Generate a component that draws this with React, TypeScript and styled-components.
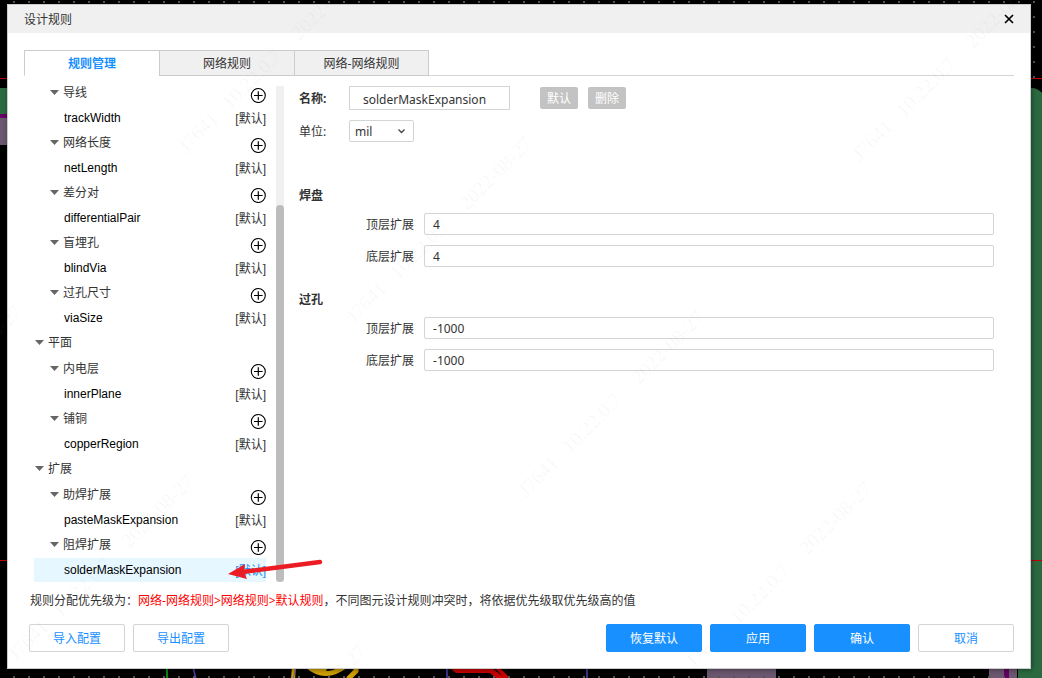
import React, { useState } from 'react';
import styled, { createGlobalStyle } from 'styled-components';

const cjk = '"Noto Sans CJK SC", sans-serif';
const uiFont = `"Noto Sans", ${cjk}`;
const blue = '#1890ff';
const line = '#d4d4d4';

const GlobalStyle = createGlobalStyle`
  *, *::before, *::after { box-sizing: border-box; }
  body {
    margin: 0;
    background: #000;
    color: #333;
    font: 12px/18px ${uiFont};
  }
  button, input, select { font: inherit; color: inherit; margin: 0; }
  ul { list-style: none; margin: 0; padding: 0; }
`;

const Page = styled.div`
  display: flex;
  min-height: 100vh;
  padding: 4px 11px 9px 7px;
  overflow: hidden;
  position: relative;
`;

const Board = styled.svg`
  position: absolute;
  inset: 0;
  width: 100%;
  height: 100%;
`;

const Watermark = styled(Board)`
  pointer-events: none;
  fill: #888;
  fill-opacity: 0.06;
  font: 20px "Liberation Serif", serif;
`;

const Dialog = styled.section`
  position: relative;
  flex: 1;
  display: flex;
  flex-direction: column;
  min-width: 0;
  background: #fff;
  border: 1px solid #ccc;
  box-shadow: 1px 1px 5px rgba(0, 0, 0, 0.4);
`;

const TitleBar = styled.header`
  display: flex;
  align-items: center;
  justify-content: space-between;
  height: 28px;
  padding: 0 16px;
  background: #f0f0f0;
`;

const Title = styled.h1`
  margin: 0;
  padding-top: 2px;
  font: inherit;
`;

const CloseButton = styled.button`
  display: flex;
  padding: 0;
  border: 0;
  background: none;
  color: #000;
`;

const Body = styled.div`
  flex: 1;
  display: flex;
  flex-direction: column;
  padding: 17px 16px 16px;
`;

const Tabs = styled.div`
  display: flex;
  border-bottom: 1px solid ${line};
`;

const Tab = styled.button<{ $active: boolean }>`
  width: 135px;
  height: 26px;
  margin-bottom: -1px;
  padding: 2px 0 0;
  border: 1px solid #ccc;
  border-right-width: 0;
  border-bottom-color: ${p => (p.$active ? '#fff' : '#ccc')};
  background: ${p => (p.$active ? '#fff' : '#f0f0f0')};
  color: ${p => (p.$active ? blue : '#333')};
  font-weight: ${p => (p.$active ? 700 : 400)};
  &:last-child { border-right-width: 1px; }
`;

const Workspace = styled.div`
  flex: 1;
  display: flex;
  gap: 15px;
  margin-top: 10px;
`;

const Sidebar = styled.nav`
  position: relative;
  display: flex;
  gap: 10px;
  width: 260px;
  padding-left: 10px;
`;

const Tree = styled.ul`
  flex: 1;
  display: flex;
  flex-direction: column;
  justify-content: flex-end;
  height: 496px;
  overflow: hidden;
`;

const GroupRow = styled.li<{ $level: number }>`
  flex: none;
  display: flex;
  align-items: center;
  gap: 4px;
  height: 26px;
  padding-left: ${p => (p.$level ? 16 : 1)}px;
`;

const GroupName = styled.span`
  flex: 1;
  line-height: 14px;
`;

const AddButton = styled.button`
  align-self: flex-end;
  display: flex;
  padding: 0 0 3px;
  border: 0;
  background: none;
  color: #000;
`;

const RuleRow = styled.li<{ $selected: boolean }>`
  flex: none;
  height: 24px;
  background: ${p => (p.$selected ? '#e6f7ff' : 'transparent')};
`;

const RuleButton = styled.button`
  display: flex;
  justify-content: space-between;
  align-items: center;
  width: 100%;
  height: 24px;
  padding: 0 0 0 30px;
  border: 0;
  background: none;
  color: #000;
  font-family: "Liberation Sans", ${cjk};
`;

const DefaultTag = styled.span<{ $selected: boolean }>`
  padding-top: 2px;
  color: ${p => (p.$selected ? blue : '#333')};
`;

const ScrollTrack = styled.div`
  display: flex;
  flex-direction: column;
  justify-content: flex-end;
  width: 8px;
  background: #f0f0f0;
`;

const ScrollThumb = styled.div`
  height: 76%;
  border-radius: 4px;
  background: #bdbdbd;
`;

const PointerArrow = styled.svg`
  position: absolute;
  right: -40px;
  bottom: 0;
  pointer-events: none;
`;

const Form = styled.form`
  flex: 1;
  display: flex;
  flex-direction: column;
  padding-right: 20px;
`;

const FormRow = styled.div`
  display: flex;
  align-items: center;
  height: 24px;
  margin-bottom: 9px;
`;

const FormLabel = styled.label<{ $bold?: boolean }>`
  width: 50px;
  padding-top: 2px;
  font-weight: ${p => (p.$bold ? 700 : 400)};
`;

const NameInput = styled.input`
  width: 161px;
  height: 24px;
  margin-right: 30px;
  padding: 2px 13px 0;
  border: 1px solid ${line};
  background: #fff;
`;

const SmallButton = styled.button`
  width: 38px;
  height: 22px;
  margin-right: 10px;
  padding: 2px 0 0;
  border: 0;
  border-radius: 2px;
  background: #c3c3c3;
  color: #fff;
`;

const SelectBox = styled.div`
  position: relative;
  display: flex;
  width: 65px;
`;

const UnitSelect = styled.select`
  width: 100%;
  height: 22px;
  padding: 2px 5px 0;
  border: 1px solid ${line};
  border-radius: 2px;
  background: #fff;
  appearance: none;
`;

const SelectArrow = styled.svg`
  position: absolute;
  right: 9px;
  top: 8px;
  pointer-events: none;
`;

const Group = styled.fieldset`
  min-width: 0;
  margin: 0 0 14px;
  padding: 0;
  border: 0;
`;

const Legend = styled.legend`
  padding: 0;
  margin-bottom: 8px;
  font-weight: 700;
`;

const Groups = styled.div`
  margin-top: 35px;
`;

const Field = styled.div`
  display: flex;
  align-items: center;
  gap: 10px;
  padding-left: 67px;
  margin-bottom: 10px;
`;

const FieldLabel = styled.label`
  padding-top: 2px;
`;

const FieldInput = styled.input`
  flex: 1;
  min-width: 0;
  height: 22px;
  padding: 0 8px;
  border: 1px solid ${line};
  border-radius: 2px;
  background: #fff;
`;

const Note = styled.p`
  margin: 10px 6px 14px;
`;

const Priority = styled.span`
  color: #f00;
`;

const Footer = styled.footer`
  display: flex;
  gap: 8px;
  padding-left: 5px;
`;

const Spacer = styled.div`
  flex: 1;
`;

const ActionButton = styled.button<{ $primary?: boolean }>`
  width: 96px;
  height: 28px;
  padding: 2px 0 0;
  border: 1px solid ${p => (p.$primary ? blue : line)};
  border-radius: 2px;
  background: ${p => (p.$primary ? blue : '#fff')};
  color: ${p => (p.$primary ? '#fff' : blue)};
`;

type Node = { name: string; rule?: string };

const nodes: Node[] = [
  { name: '导线', rule: 'trackWidth' },
  { name: '网络长度', rule: 'netLength' },
  { name: '差分对', rule: 'differentialPair' },
  { name: '盲埋孔', rule: 'blindVia' },
  { name: '过孔尺寸', rule: 'viaSize' },
  { name: '平面' },
  { name: '内电层', rule: 'innerPlane' },
  { name: '铺铜', rule: 'copperRegion' },
  { name: '扩展' },
  { name: '助焊扩展', rule: 'pasteMaskExpansion' },
  { name: '阻焊扩展', rule: 'solderMaskExpansion' },
];

const groups = [
  { title: '焊盘', id: 'pad', value: '4' },
  { title: '过孔', id: 'via', value: '-1000' },
];

const marks = [
  [186, 154], [354, 324], [526, 498], [694, 669],
  [-156, 492], [16, 662], [188, 832], [860, 162],
];

const Caret = () => (
  <svg width="9" height="9" viewBox="0 0 9 9" aria-hidden="true">
    <path d="M0 1h9L4.5 6z" fill="#666" />
  </svg>
);

const PlusCircle = () => (
  <svg width="16" height="16" viewBox="0 0 16 16" fill="none" stroke="currentColor" aria-hidden="true">
    <circle cx="8.3" cy="8.5" r="7" strokeWidth="1.1" />
    <path d="M4 8.5h8.6M8.3 4.2v8.6" strokeWidth="1.2" />
  </svg>
);

const BoardDrawing = () => (
  <Board aria-hidden="true">
    <defs>
      <pattern id="grid" width="15" height="15" patternUnits="userSpaceOnUse">
        <rect x="13" y="1" width="2" height="2" fill="#555" />
      </pattern>
    </defs>
    <rect x="0" y="88" width="20" height="26" fill="#2b6a40" />
    <rect x="0" y="118" width="20" height="27" fill="#6b5770" />
    <rect x="0" y="114" width="20" height="4" fill="#660066" />
    <rect x="707" y="660" width="69" height="30" fill="#6b5770" />
    <rect x="989" y="660" width="28" height="30" fill="#6b5770" />
    <rect x="1004" y="660" width="5" height="30" fill="#660066" />
    <path d="M167 660v20" stroke="#0b0" strokeWidth="1.5" />
    <path d="M193 667l3 12M447 660v20M587 660v20" stroke="#4a45b0" strokeWidth="1.5" fill="none" />
    <path d="M294 667l-1 12" stroke="#cfa000" strokeWidth="4" />
    <path d="M296 667l-3 12" stroke="#5a55b8" strokeWidth="1" />
    <path d="M305 667q20 18 43 0h-10q-4 4-12 4l2-4z" fill="#cfa000" />
    <path d="M356 667v4l-8 8" stroke="#cfa000" strokeWidth="5" fill="none" />
    <path d="M450 668h42l14 11h-9l-7-6h-34zM495 668h5l11 11h-6z" fill="#c80000" />
    <rect width="100%" height="100%" fill="url(#grid)" />
    <path d="M1018 700V88h14q6 0 12 7v605z" fill="#2b6a40" />
    <path d="M0 78.5h2000M0 560.5h2000" stroke="#c00000" strokeWidth="1" />
  </Board>
);

export default function App() {
  const [tab, setTab] = useState(0);
  const [selected, setSelected] = useState('solderMaskExpansion');

  return (
    <Page>
      <GlobalStyle />
      <BoardDrawing />
      <Dialog role="dialog" aria-labelledby="dialog-title">
        <TitleBar>
          <Title id="dialog-title">设计规则</Title>
          <CloseButton type="button" aria-label="关闭">
            <svg width="10" height="10" viewBox="0 0 10 10" aria-hidden="true">
              <path d="M1 1l8 8M9 1L1 9" stroke="currentColor" strokeWidth="1.7" />
            </svg>
          </CloseButton>
        </TitleBar>
        <Body>
          <Tabs role="tablist">
            {['规则管理', '网络规则', '网络-网络规则'].map((name, i) => (
              <Tab key={name} type="button" role="tab" aria-selected={tab === i} $active={tab === i} onClick={() => setTab(i)}>
                {name}
              </Tab>
            ))}
          </Tabs>
          <Workspace>
            <Sidebar aria-label="规则">
              <Tree>
                {nodes.map(({ name, rule }) => (
                  <React.Fragment key={name}>
                    <GroupRow $level={rule ? 1 : 0}>
                      <Caret />
                      <GroupName>{name}</GroupName>
                      {rule && (
                        <AddButton type="button" aria-label={`添加${name}`}>
                          <PlusCircle />
                        </AddButton>
                      )}
                    </GroupRow>
                    {rule && (
                      <RuleRow $selected={rule === selected}>
                        <RuleButton type="button" onClick={() => setSelected(rule)}>
                          <span>{rule}</span>
                          <DefaultTag $selected={rule === selected}>[默认]</DefaultTag>
                        </RuleButton>
                      </RuleRow>
                    )}
                  </React.Fragment>
                ))}
              </Tree>
              <ScrollTrack>
                <ScrollThumb />
              </ScrollTrack>
              <PointerArrow width="96" height="24" viewBox="0 0 96 24" aria-hidden="true">
                <path d="M14 14L92 4" stroke="#ec1c24" strokeWidth="4.4" strokeLinecap="round" />
                <path d="M0 16L17 6l-1 8 3 7z" fill="#ec1c24" />
              </PointerArrow>
            </Sidebar>
            <Form onSubmit={e => e.preventDefault()}>
              <FormRow>
                <FormLabel $bold htmlFor="rule-name">名称:</FormLabel>
                <NameInput id="rule-name" defaultValue="solderMaskExpansion" />
                <SmallButton type="button">默认</SmallButton>
                <SmallButton type="button">删除</SmallButton>
              </FormRow>
              <FormRow>
                <FormLabel htmlFor="unit">单位:</FormLabel>
                <SelectBox>
                  <UnitSelect id="unit" defaultValue="mil">
                    <option>mil</option>
                    <option>mm</option>
                  </UnitSelect>
                  <SelectArrow width="7" height="7" viewBox="0 0 7 7" aria-hidden="true">
                    <path d="M.5 1.5l3 3 3-3" fill="none" stroke="#444" strokeWidth="1.3" />
                  </SelectArrow>
                </SelectBox>
              </FormRow>
              <Groups>
                {groups.map(g => (
                  <Group key={g.id}>
                    <Legend>{g.title}</Legend>
                    {['顶层扩展', '底层扩展'].map((label, i) => (
                      <Field key={label}>
                        <FieldLabel htmlFor={g.id + i}>{label}</FieldLabel>
                        <FieldInput id={g.id + i} defaultValue={g.value} />
                      </Field>
                    ))}
                  </Group>
                ))}
              </Groups>
            </Form>
          </Workspace>
          <Note>
            规则分配优先级为：<Priority>网络-网络规则&gt;网络规则&gt;默认规则</Priority>，不同图元设计规则冲突时，将依据优先级取优先级高的值
          </Note>
          <Footer>
            <ActionButton type="button">导入配置</ActionButton>
            <ActionButton type="button">导出配置</ActionButton>
            <Spacer />
            <ActionButton type="button" $primary>恢复默认</ActionButton>
            <ActionButton type="button" $primary>应用</ActionButton>
            <ActionButton type="button" $primary>确认</ActionButton>
            <ActionButton type="button">取消</ActionButton>
          </Footer>
        </Body>
      </Dialog>
      <Watermark aria-hidden="true">
        {marks.map(([x, y]) => (
          <text key={`${x},${y}`} transform={`translate(${x} ${y}) rotate(-45)`}>
            <tspan x="0">J7641</tspan>
            <tspan x="62">10.22.0.7</tspan>
            <tspan x="160">2022-08-27</tspan>
          </text>
        ))}
      </Watermark>
    </Page>
  );
}
